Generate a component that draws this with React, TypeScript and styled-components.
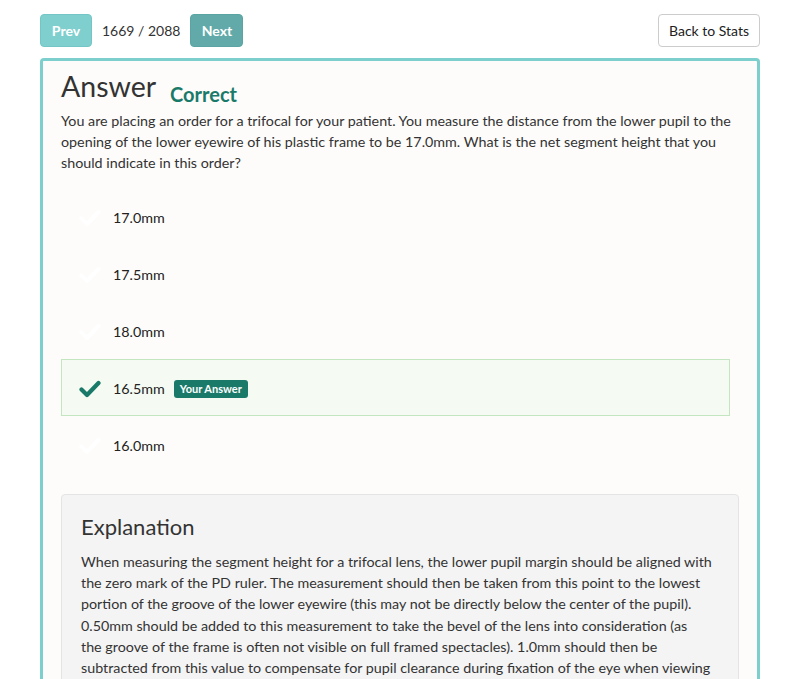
import React from "react";
import styled, { createGlobalStyle } from "styled-components";

const Global = createGlobalStyle`
  html, body { margin: 0; padding: 0; background: #ffffff; }
  body { font-family: Lato, "Open Sans", sans-serif; color: #333333; }
  * { box-sizing: border-box; }
`;

const Page = styled.div`
  padding: 14px 40px 0 40px;
`;

const TopBar = styled.div`
  display: flex;
  align-items: center;
  justify-content: space-between;
  height: 33px;
`;

const NavGroup = styled.div`
  display: flex;
  align-items: center;
`;

const NavButton = styled.button<{ $dark?: boolean }>`
  height: 33px;
  width: ${(p) => (p.$dark ? "53px" : "52px")};
  padding: 0;
  border-radius: 4px;
  border: 1px solid ${(p) => (p.$dark ? "#5aa5a3" : "#74c6c6")};
  background: ${(p) => (p.$dark ? "#61aaa9" : "#7fcfcf")};
  color: #ffffff;
  font-family: Lato, sans-serif;
  font-weight: 700;
  font-size: 14px;
`;

const Counter = styled.span`
  font-size: 14px;
  color: #333;
  margin: 0 10px;
`;

const BackButton = styled.button`
  height: 33px;
  width: 102px;
  padding: 0;
  border-radius: 4px;
  border: 1px solid #cccccc;
  background: #ffffff;
  color: #222;
  font-family: Lato, sans-serif;
  font-size: 14px;
`;

const Card = styled.div`
  margin-top: 11px;
  border: 3px solid #7ccfcd;
  border-bottom: none;
  border-radius: 4px 4px 0 0;
  background: #fdfcfa;
  padding: 7px 18px 0 18px;
  height: 640px;
  overflow: hidden;
`;

const TitleRow = styled.div`
  line-height: 36px;
  height: 42px;
`;

const Title = styled.h1`
  display: inline;
  margin: 0 14px 0 0;
  font-size: 28.5px;
  font-weight: 400;
  color: #333;
`;

const Status = styled.span`
  font-size: 20px;
  font-weight: 700;
  color: #1a7a69;
  vertical-align: -5px;
`;

const Question = styled.p`
  margin: 0;
  font-size: 14.3px;
  line-height: 21px;
  color: #333;
`;

const Options = styled.div`
  margin: 15px 9px 0 0;
  display: flex;
  flex-direction: column;
`;

const Option = styled.div<{ $selected?: boolean }>`
  display: flex;
  align-items: center;
  height: 57px;
  padding: 2px 17px 0 17px;
  border: 1px solid ${(p) => (p.$selected ? "#c3e5bf" : "transparent")};
  background: ${(p) => (p.$selected ? "#f5faf3" : "transparent")};
  font-size: 14.3px;
  color: #222;
`;

const CheckBox = styled.span<{ $on?: boolean }>`
  width: 22px;
  height: 18px;
  margin-right: 12px;
  display: flex;
  align-items: center;
  color: ${(p) => (p.$on ? "#1a7a69" : "#ffffff")};
`;

const Badge = styled.span`
  margin-left: 9px;
  background: #1a7a69;
  color: #fff;
  font-size: 11px;
  font-weight: 700;
  padding: 2px 6px;
  border-radius: 3px;
  line-height: 14px;
`;

const Explanation = styled.div`
  margin-top: 21px;
  background: #f4f4f4;
  border: 1px solid #e4e4e4;
  border-radius: 4px;
  padding: 16px 19px 20px 19px;
`;

const ExplTitle = styled.h2`
  margin: 0 0 8px 0;
  font-size: 22px;
  font-weight: 400;
  line-height: 32px;
  color: #333;
`;

const ExplText = styled.p`
  margin: 0;
  font-size: 14.3px;
  line-height: 21.2px;
  color: #333;
`;

const Check = () => (
  <svg width="22" height="18" viewBox="0 0 22 18">
    <path d="M2.5 9.5 L8 15 L19.5 3" fill="none" stroke="currentColor" strokeWidth="4.2" strokeLinecap="round" strokeLinejoin="round" />
  </svg>
);

const options = [
  { label: "17.0mm" },
  { label: "17.5mm" },
  { label: "18.0mm" },
  { label: "16.5mm", selected: true },
  { label: "16.0mm" },
];

const explLines = [
  "When measuring the segment height for a trifocal lens, the lower pupil margin should be aligned with",
  "the zero mark of the PD ruler. The measurement should then be taken from this point to the lowest",
  "portion of the groove of the lower eyewire (this may not be directly below the center of the pupil).",
  "0.50mm should be added to this measurement to take the bevel of the lens into consideration (as",
  "the groove of the frame is often not visible on full framed spectacles). 1.0mm should then be",
  "subtracted from this value to compensate for pupil clearance during fixation of the eye when viewing",
  "objects at near.",
];

export default function App() {
  return (
    <>
      <Global />
      <Page>
        <TopBar>
          <NavGroup>
            <NavButton>Prev</NavButton>
            <Counter>1669 / 2088</Counter>
            <NavButton $dark>Next</NavButton>
          </NavGroup>
          <BackButton>Back to Stats</BackButton>
        </TopBar>
        <Card>
          <TitleRow>
            <Title>Answer</Title>
            <Status>Correct</Status>
          </TitleRow>
          <Question>
            You are placing an order for a trifocal for your patient. You measure the distance from the lower pupil to the
            opening of the lower eyewire of his plastic frame to be 17.0mm. What is the net segment height that you
            should indicate in this order?
          </Question>
          <Options>
            {options.map((o) => (
              <Option key={o.label} $selected={o.selected}>
                <CheckBox $on={o.selected}>
                  <Check />
                </CheckBox>
                {o.label}
                {o.selected && <Badge>Your Answer</Badge>}
              </Option>
            ))}
          </Options>
          <Explanation>
            <ExplTitle>Explanation</ExplTitle>
            <ExplText>
              {explLines.map((l, i) => (
                <React.Fragment key={i}>
                  {l}
                  {i < explLines.length - 1 && <br />}
                </React.Fragment>
              ))}
            </ExplText>
          </Explanation>
        </Card>
      </Page>
    </>
  );
}
